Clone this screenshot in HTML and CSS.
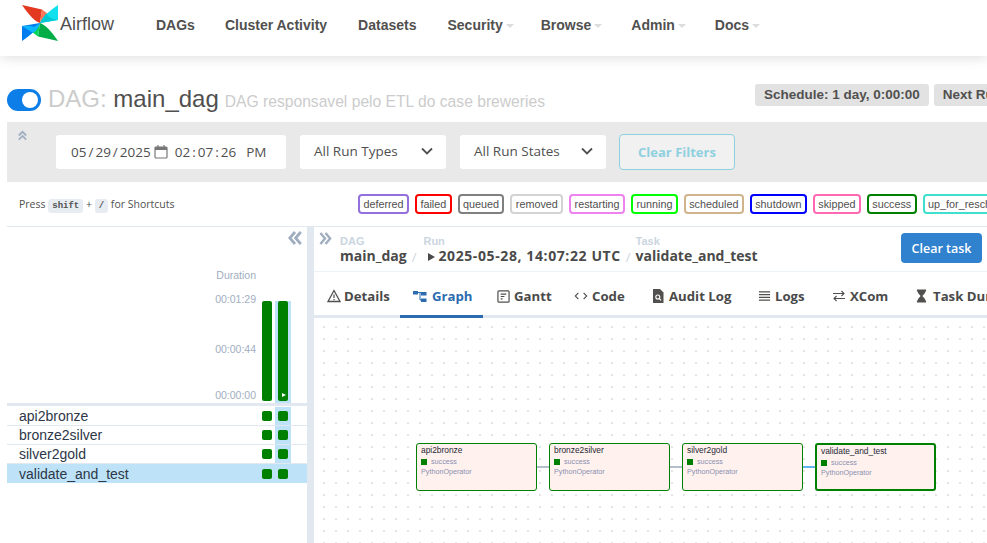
FILE: index.html
```html
<!DOCTYPE html>
<html lang="en">
<head>
  <meta charset="UTF-8">
  <title>Airflow - main_dag</title>
  <link rel="stylesheet" href="styles.css">
</head>
<body>
  <nav class="navbar">
    <a class="brand">
      <svg class="brand-logo" viewBox="0 0 36 36" width="36" height="36">
        <path d="M0 0L20 4.500L18 18Q11 16 0 0Z" fill="#e43921"/>
        <path d="M20 4.500L26 9Q25 14 18 18Z" fill="#ff7557"/>
        <path d="M36 0L36 15L18 18Q20 11 36 0Z" fill="#11e1ee"/>
        <path d="M18 18L24 8.500Q28 14 36 15Z" fill="#00c7d4"/>
        <path d="M36 36L16 31.500L18 18Q25 20 36 36Z" fill="#00ad46"/>
        <path d="M16 31.500L10 27Q11 22 18 18Z" fill="#04d659"/>
        <path d="M0 36L0 21L18 18Q16 25 0 36Z" fill="#017cee"/>
        <path d="M0 21Q8 20 12 22L18 18Q16 25 11 28Z" fill="#0cb6ff"/>
      </svg>
      <span class="brand-name">Airflow</span>
    </a>
    <ul class="nav-links">
      <li class="nav-dags">DAGs</li>
      <li class="nav-cluster">Cluster Activity</li>
      <li class="nav-datasets">Datasets</li>
      <li class="nav-security caret">Security</li>
      <li class="nav-browse caret">Browse</li>
      <li class="nav-admin caret">Admin</li>
      <li class="caret">Docs</li>
    </ul>
  </nav>

  <main class="container">
    <div class="dag-title">
      <span class="toggle"><span class="toggle-knob"></span></span>
      <h4 class="dag-name"><span class="dag-prefix">DAG:</span> main_dag</h4>
      <span class="dag-desc">DAG responsavel pelo ETL do case breweries</span>
      <div class="dag-meta">
        <span class="meta-badge">Schedule: 1 day, 0:00:00</span>
        <span class="meta-badge">Next Run: None</span>
      </div>
    </div>

    <div class="filter-bar">
      <svg class="filter-collapse" viewBox="0 0 12 12" width="11" height="11"><path d="M2 6l4-4 4 4M2 10.500l4-4 4 4" fill="none" stroke="#a0aec0" stroke-width="2"/></svg>
      <div class="date-input">
        <span>05</span><i>/</i><span>29</span><i>/</i><span>2025</span>
        <svg viewBox="0 0 14 14" width="14" height="14"><rect x="1" y="2" width="12" height="11" rx="1" fill="none" stroke="#777" stroke-width="1.200"/><path d="M1 2h12v3H1z" fill="#777"/><path d="M4 0v3M10 0v3" stroke="#777" stroke-width="1.200"/></svg>
        <span class="date-time">02</span><i>:</i><span>07</span><i>:</i><span>26</span><span class="date-ampm">PM</span>
      </div>
      <div class="select">All Run Types<svg viewBox="0 0 12 8" width="12" height="8"><path d="M1 1.500l5 5 5-5" fill="none" stroke="#51504f" stroke-width="1.800"/></svg></div>
      <div class="select">All Run States<svg viewBox="0 0 12 8" width="12" height="8"><path d="M1 1.500l5 5 5-5" fill="none" stroke="#51504f" stroke-width="1.800"/></svg></div>
      <button type="button" class="clear-filters">Clear Filters</button>
    </div>

    <div class="legend-row">
      <p class="shortcuts">Press <kbd>shift</kbd> + <kbd>/</kbd> for Shortcuts</p>
      <div class="legend">
        <span class="state state-deferred">deferred</span>
        <span class="state state-failed">failed</span>
        <span class="state state-queued">queued</span>
        <span class="state state-removed">removed</span>
        <span class="state state-restarting">restarting</span>
        <span class="state state-running">running</span>
        <span class="state state-scheduled">scheduled</span>
        <span class="state state-shutdown">shutdown</span>
        <span class="state state-skipped">skipped</span>
        <span class="state state-success">success</span>
        <span class="state state-resched">up_for_reschedule</span>
      </div>
    </div>

    <div class="panels">
      <section class="grid-panel">
        <div class="grid-collapse">
          <svg viewBox="0 0 14 14" width="14" height="14"><path d="M7 1L1.800 7L7 13M12.800 1L7.600 7l5.200 6" fill="none" stroke="#a0aec0" stroke-width="2.800"/></svg>
        </div>
        <div class="chart">
          <div class="axis">
            <span class="axis-title">Duration</span>
            <span class="tick tick-top">00:01:29</span>
            <span class="tick tick-mid">00:00:44</span>
            <span class="tick tick-low">00:00:00</span>
          </div>
          <div class="run-col"><div class="bar"></div></div>
          <div class="run-col run-col-active"><div class="bar"><span class="bar-play"></span></div></div>
        </div>
        <div class="task-list">
          <div class="task-row"><span class="task-name">api2bronze</span><span class="cell"><b></b></span><span class="cell cell-active"><b></b></span></div>
          <div class="task-row"><span class="task-name">bronze2silver</span><span class="cell"><b></b></span><span class="cell cell-active"><b></b></span></div>
          <div class="task-row"><span class="task-name">silver2gold</span><span class="cell"><b></b></span><span class="cell cell-active"><b></b></span></div>
          <div class="task-row task-row-active"><span class="task-name">validate_and_test</span><span class="cell"><b></b></span><span class="cell cell-active"><b></b></span></div>
        </div>
      </section>

      <section class="details-panel">
        <header class="crumbs">
          <svg class="crumbs-toggle" viewBox="0 0 14 14" width="13" height="13"><path d="M1.500 1L6.500 7l-5 6M7 1l5 6-5 6" fill="none" stroke="#a0aec0" stroke-width="2.600"/></svg>
          <div class="crumb crumb-dag"><small>DAG</small><strong>main_dag</strong></div>
          <span class="crumb-sep">/</span>
          <div class="crumb"><small>Run</small><strong class="crumb-run"><span class="crumb-play"></span>2025-05-28, 14:07:22 UTC</strong></div>
          <span class="crumb-sep">/</span>
          <div class="crumb crumb-task"><small>Task</small><strong>validate_and_test</strong></div>
          <button type="button" class="clear-task">Clear task</button>
        </header>

        <div class="tabs">
          <a class="tab tab-details">
            <svg viewBox="0 0 14 14" width="14" height="14"><path d="M7 1.500L13 12.500H1Z" fill="none" stroke="#51504f" stroke-width="1.300"/><path d="M7 5.500v3.500M7 10v1.300" stroke="#51504f" stroke-width="1.200"/></svg>Details</a>
          <a class="tab tab-graph tab-active">
            <svg viewBox="0 0 14 14" width="14" height="14"><path d="M0 2h5v3.500H0zM8 3h5.500v3.500H8zM8 9.500h5.500V13H8z" fill="#2b6cb0"/><path d="M5 3.500h3M7 3.500v7.500h1" fill="none" stroke="#2b6cb0"/></svg>Graph</a>
          <a class="tab tab-gantt">
            <svg viewBox="0 0 14 14" width="13" height="13"><rect x="1" y="1" width="12" height="12" rx="1" fill="none" stroke="#51504f" stroke-width="1.300"/><path d="M4 4.500h6M4 7h4M4 9.500h2" stroke="#51504f" stroke-width="1.200"/></svg>Gantt</a>
          <a class="tab tab-code">
            <svg viewBox="0 0 16 14" width="14" height="14"><path d="M5 3.500L1.500 7 5 10.500M11 3.500L14.500 7 11 10.500" fill="none" stroke="#51504f" stroke-width="1.300"/></svg>Code</a>
          <a class="tab tab-audit">
            <svg viewBox="0 0 12 14" width="12" height="14"><path d="M1 0h7l3.500 3.500V14H1Z" fill="#51504f"/><circle cx="5.800" cy="8" r="2" fill="none" stroke="#fff" stroke-width="1.100"/><path d="M7.200 9.500l1.800 1.800" stroke="#fff" stroke-width="1.100"/></svg>Audit Log</a>
          <a class="tab tab-logs">
            <svg viewBox="0 0 14 14" width="13" height="14"><path d="M1 2.500h12M1 5.500h12M1 8.500h12M1 11.500h12" stroke="#51504f" stroke-width="1.300"/></svg>Logs</a>
          <a class="tab tab-xcom">
            <svg viewBox="0 0 14 14" width="14" height="14"><path d="M1 4.500h11M9.500 2L12 4.500 9.500 7M13 9.500H2M4.500 7L2 9.500 4.500 12" fill="none" stroke="#51504f" stroke-width="1.100"/></svg>XCom</a>
          <a class="tab tab-duration">
            <svg viewBox="0 0 12 14" width="11" height="14"><path d="M1 0h10v2H10v1.500L7 7l3 3.500V12h1v2H1v-2h1v-1.500L5 7 2 3.500V2H1z" fill="#51504f"/></svg>Task Duration</a>
        </div>

        <div class="graph">
          <div class="edge edge-1"></div>
          <div class="edge edge-2"></div>
          <div class="edge edge-3"></div>
          <div class="node node-1"><h5>api2bronze</h5><p class="node-state"><b></b>success</p><p class="node-op">PythonOperator</p></div>
          <div class="node node-2"><h5>bronze2silver</h5><p class="node-state"><b></b>success</p><p class="node-op">PythonOperator</p></div>
          <div class="node node-3"><h5>silver2gold</h5><p class="node-state"><b></b>success</p><p class="node-op">PythonOperator</p></div>
          <div class="node node-4 node-active"><h5>validate_and_test</h5><p class="node-state"><b></b>success</p><p class="node-op">PythonOperator</p></div>
        </div>
      </section>
    </div>
  </main>
</body>
</html>
```

FILE: styles.css
```css
html, body {
  height: 100%;
  overflow: hidden;
}
body {
  margin: 0;
  background: #fff;
  color: #51504f;
  font-family: "Liberation Sans", Arial, sans-serif;
  font-size: 14px;
}

/* top bar */
.navbar {
  display: flex;
  align-items: flex-start;
  height: 56px;
  box-sizing: border-box;
  padding-left: 22px;
  background: #fff;
  box-shadow: 0 2px 12px rgba(0, 0, 0, 0.13);
}
.brand {
  display: flex;
  align-items: center;
  width: 134px;
  padding-top: 5px;
}
.brand-logo {
  flex: none;
}
.brand-name {
  margin-left: 2px;
  margin-top: 3px;
  font-size: 18px;
  color: #51504f;
}
.nav-links {
  display: flex;
  margin: 0;
  padding: 17px 0 0;
  list-style: none;
  font-weight: 700;
  font-size: 14px;
  line-height: 16px;
  white-space: nowrap;
}
.nav-links li {
  margin-right: 31px;
}
.nav-links .nav-dags {
  margin-right: 30px;
}
.nav-links .nav-security {
  margin-right: 27px;
}
.nav-links .nav-browse,
.nav-links .nav-admin {
  margin-right: 29px;
}
.caret::after {
  content: "";
  display: inline-block;
  margin-left: 3px;
  vertical-align: 2px;
  border-top: 4px solid #ddd;
  border-left: 4px solid transparent;
  border-right: 4px solid transparent;
}

.container {
  padding-left: 7px;
}

/* dag title */
.dag-title {
  display: flex;
  align-items: center;
  height: 66px;
  white-space: nowrap;
}
.toggle {
  flex: none;
  width: 34px;
  height: 22px;
  margin-top: 22px;
  border-radius: 11px;
  background: #0d7ee8;
  position: relative;
}
.toggle-knob {
  position: absolute;
  top: 3px;
  left: 15px;
  width: 16px;
  height: 16px;
  border-radius: 50%;
  background: #fff;
}
.dag-name {
  margin: 20px 0 0 7px;
  font-size: 24px;
  line-height: 28px;
  font-weight: 400;
  color: #51504f;
}
.dag-prefix {
  color: #ccc;
}
.dag-desc {
  margin: 26px 0 0 6px;
  font-size: 15.650px;
  color: #ccc;
}
.dag-meta {
  display: flex;
  gap: 5px;
  position: absolute;
  left: 755px;
  top: 84px;
}
.meta-badge {
  padding: 0 9px;
  height: 22px;
  line-height: 22px;
  border-radius: 3px;
  background: #e2e2e2;
  font-size: 13.500px;
  font-weight: 700;
}

/* filters */
.filter-bar {
  display: flex;
  align-items: center;
  height: 60px;
  background: #e9e9e9;
  white-space: nowrap;
  position: relative;
}
.filter-collapse {
  position: absolute;
  left: 10px;
  top: 8px;
}
.date-input,
.select {
  display: flex;
  align-items: center;
  height: 34px;
  box-sizing: border-box;
  border-radius: 3px;
  background: #fff;
  font-family: "Open Sans", sans-serif;
  font-size: 13.500px;
}
.date-input {
  width: 230px;
  margin-left: 49px;
  padding-left: 15px;
}
.date-input i {
  font-style: normal;
  padding: 0 2px;
}
.date-input svg {
  margin: 0 7px 0 3px;
}
.date-ampm {
  margin-left: 10px;
}
.select {
  justify-content: space-between;
  width: 146px;
  margin-left: 14px;
  padding: 0 13px 2px 14px;
}
.clear-filters {
  width: 116px;
  height: 36px;
  margin-left: 13px;
  padding: 0;
  border: 1px solid #8fd0df;
  border-radius: 4px;
  background: #f1f1f1;
  color: #8fd0df;
  font-family: "Open Sans", sans-serif;
  font-size: 13px;
  font-weight: 700;
}

/* legend */
.legend-row {
  display: flex;
  align-items: center;
  height: 44px;
  white-space: nowrap;
}
.shortcuts {
  margin: 2px 0 0 12px;
  font-family: "Open Sans", sans-serif;
  font-size: 10.500px;
}
kbd {
  display: inline-block;
  padding: 0 4px;
  line-height: 14px;
  border-radius: 3px;
  background: #e7ecf3;
  font-family: "Liberation Mono", monospace;
  font-size: 9px;
  font-weight: 700;
}
.legend {
  display: flex;
  gap: 6px;
  position: absolute;
  left: 358px;
  top: 194px;
}
.state {
  height: 20px;
  box-sizing: border-box;
  padding: 0 3.400px;
  border: 2px solid;
  border-radius: 4px;
  font-size: 10.800px;
  line-height: 16px;
  color: #51504f;
}
.state-deferred { border-color: #9370db; }
.state-failed { border-color: #f00; }
.state-queued { border-color: #808080; }
.state-removed { border-color: #d3d3d3; }
.state-restarting { border-color: #ee82ee; }
.state-running { border-color: #0f0; }
.state-scheduled { border-color: #d2b48c; }
.state-shutdown { border-color: #00f; }
.state-skipped { border-color: #ff69b4; }
.state-success { border-color: #008000; }
.state-resched { border-color: #40e0d0; }

/* split panels */
.panels {
  display: flex;
  height: 317px;
  border-top: 1px solid #e2e8f0;
}
.grid-panel {
  flex: none;
  width: 300px;
  border-right: 7px solid #e2e8f0;
  color: #51504f;
  position: relative;
}
.grid-collapse {
  position: absolute;
  top: 4px;
  right: 5px;
}
.chart {
  display: flex;
  justify-content: flex-end;
  height: 179px;
  padding-right: 16px;
  box-sizing: border-box;
  border-bottom: 3px solid #e2e8f0;
}
.axis {
  display: flex;
  flex-direction: column;
  align-items: flex-end;
  margin-right: 3px;
  font-size: 10.500px;
  line-height: 12px;
  color: #a0aec0;
}
.axis-title {
  margin-top: 42px;
}
.tick-top {
  margin-top: 12px;
}
.tick-mid {
  margin-top: 38px;
}
.tick-low {
  margin-top: 34px;
}
.run-col {
  display: flex;
  align-items: flex-end;
  justify-content: center;
  width: 16px;
}
.run-col-active {
  background: linear-gradient(#fff 74px, #bee3f8 74px);
}
.bar {
  width: 10px;
  height: 100px;
  margin-bottom: 2px;
  border-radius: 2px;
  background: #008000;
  position: relative;
}
.bar-play {
  position: absolute;
  left: 4px;
  bottom: 4px;
  border-left: 4px solid #fff;
  border-top: 2px solid transparent;
  border-bottom: 2px solid transparent;
}
.task-list {
  padding-top: 1px;
}
.task-row {
  display: flex;
  align-items: center;
  height: 18px;
  padding: 0 16px 0 12px;
  border-bottom: 1px solid #e2e8f0;
  color: #2d3748;
  font-size: 14px;
}
.task-row-active {
  background: #bee3f8;
  height: 19px;
  border-bottom: 0;
}
.task-name {
  flex: 1;
}
.cell {
  display: flex;
  align-items: center;
  justify-content: center;
  width: 16px;
  height: 100%;
}
.cell-active {
  background: #bee3f8;
}
.cell b {
  display: block;
  width: 10px;
  height: 10px;
  border-radius: 2px;
  background: #008000;
}

/* right side */
.details-panel {
  flex: none;
  width: 673px;
  display: flex;
  flex-direction: column;
  font-family: "Open Sans", sans-serif;
}
.crumbs {
  display: flex;
  align-items: flex-start;
  height: 44px;
  padding-left: 5px;
  border-bottom: 1px solid #edf2f7;
  position: relative;
  white-space: nowrap;
}
.crumbs-toggle {
  margin-top: 5px;
}
.crumb {
  display: flex;
  flex-direction: column;
  margin-left: 7px;
  padding-top: 8px;
}
.crumb-dag {
  margin-left: 8px;
}
.crumb-task {
  margin-left: 5px;
}
.crumb small {
  height: 13px;
  font-family: "Liberation Sans", Arial, sans-serif;
  font-size: 11px;
  line-height: 13px;
  font-weight: 700;
  color: #cbd5e0;
}
.crumb strong {
  font-size: 14px;
  line-height: 16px;
  font-weight: 700;
  color: #4a4a4a;
}
.crumb .crumb-run {
  letter-spacing: 0.6px;
}
.crumb-sep {
  margin: 21px 0 0 5px;
  color: #cbd5e0;
  font-size: 13px;
}
.crumb-play {
  display: inline-block;
  margin-right: 3px;
  margin-left: 5px;
  border-left: 7px solid #4a4a4a;
  border-top: 4px solid transparent;
  border-bottom: 4px solid transparent;
}
.clear-task {
  position: absolute;
  top: 6px;
  right: 5px;
  width: 81px;
  height: 30px;
  padding: 0;
  border: 0;
  border-radius: 4px;
  background: #3182ce;
  color: #fff;
  font-family: "Open Sans", sans-serif;
  font-size: 12.500px;
  font-weight: 600;
}
.tabs {
  display: flex;
  height: 43px;
  border-bottom: 3px solid #e2e8f0;
  white-space: nowrap;
}
.tab {
  display: flex;
  flex: none;
  align-items: center;
  gap: 4px;
  height: 46px;
  box-sizing: border-box;
  padding: 5px 0 0 13px;
  border-bottom: 3px solid transparent;
  font-size: 13.200px;
  font-weight: 700;
  color: #4a4a4a;
}
.tab-details { width: 86px; gap: 3px; }
.tab-graph { width: 83px; gap: 5px; }
.tab-gantt { width: 78px; padding-left: 14px; }
.tab-code { width: 78px; }
.tab-audit { width: 106px; gap: 5px; }
.tab-logs { width: 75px; }
.tab-xcom { width: 82px; padding-left: 12px; }
.tab-duration { padding-left: 14px; gap: 6px; }
.tab-active {
  color: #2b6cb0;
  border-bottom-color: #2b6cb0;
}

/* dag graph: nodes sit on a free canvas */
.graph {
  flex: 1;
  position: relative;
  background-image: radial-gradient(circle, #e4e4e4 0.8px, transparent 1px);
  background-size: 12px 12px;
  background-position: 4px 3px;
  font-family: "Liberation Sans", Arial, sans-serif;
}
.node {
  position: absolute;
  top: 125px;
  width: 121px;
  height: 48px;
  box-sizing: border-box;
  padding: 1px 4px;
  border: 1px solid #008000;
  border-radius: 3px;
  background: #fff2ee;
}
.node-1 { left: 102px; }
.node-2 { left: 235px; }
.node-3 { left: 368px; }
.node-4 { left: 501px; }
.node-active {
  border-width: 2px;
}
.node h5 {
  margin: 0;
  font-size: 8.400px;
  line-height: 11px;
  font-weight: 400;
  color: #1f2937;
}
.node p {
  margin: 0;
  font-size: 7.200px;
  line-height: 10px;
  color: #8a8fb0;
}
.node .node-state {
  display: flex;
  align-items: center;
  margin-top: 1px;
}
.node-state b {
  width: 6px;
  height: 6px;
  margin-right: 4px;
  background: #008000;
}
.edge {
  position: absolute;
  top: 148px;
  width: 12px;
  height: 2px;
  background: #b4bfce;
}
.edge-1 { left: 223px; }
.edge-2 { left: 356px; }
.edge-3 {
  left: 489px;
  background: #63b3ed;
}
```
